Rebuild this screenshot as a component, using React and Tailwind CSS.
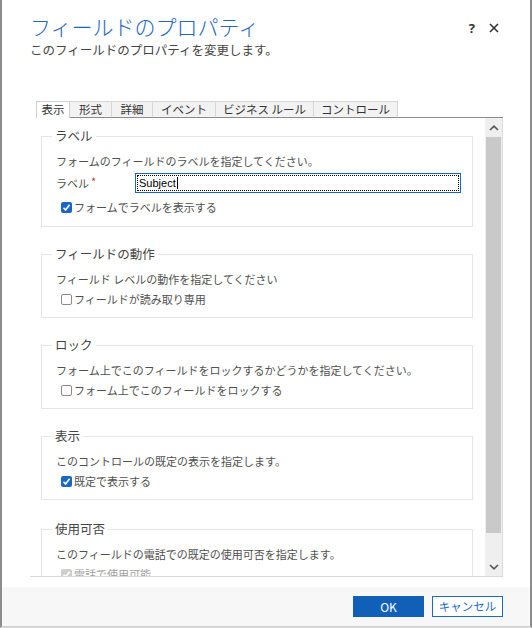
import { useState } from "react";

const jp = { fontFamily: '"Noto Sans CJK JP", "Noto Sans", sans-serif' };

const tabs = [
  { name: "表示", w: "w-[34px]" },
  { name: "形式", w: "w-[42px]" },
  { name: "詳細", w: "w-[41px]" },
  { name: "イベント", w: "w-[63px]" },
  { name: "ビジネス ルール", w: "w-[98px]" },
  { name: "コントロール", w: "w-[84px]" },
];

function CheckBox({ checked, disabled, label }) {
  return (
    <div className="flex h-4 items-center pl-[19px] text-[11px] text-[#505050]">
      {checked ? (
        <span
          className={`flex h-[11px] w-[11px] items-center justify-center rounded-[2px] ${
            disabled ? "bg-[#cfcfcf]" : "bg-[#1a66c8]"
          }`}
        >
          <svg width="9" height="9" viewBox="0 0 9 9">
            <path d="M1.5 4.8 L3.6 7 L7.6 1.8" fill="none" stroke="white" strokeWidth="1.6" />
          </svg>
        </span>
      ) : (
        <span className="h-[11px] w-[11px] rounded-[2px] border border-[#8a8a8a] bg-white" />
      )}
      <span className={`ml-[2px] ${disabled ? "text-[#a0a0a0]" : ""}`}>{label}</span>
    </div>
  );
}

function Section({ title, first, children }) {
  return (
    <fieldset className={`mb-[19px] border border-[#e5e5e5] ${first ? "pb-[11px]" : "pb-[10px]"}`}>
      <legend className="ml-[10px] px-[3px] text-[12.5px] leading-4 text-[#444]">{title}</legend>
      <div className="flex flex-col gap-1 pt-[9px]">{children}</div>
    </fieldset>
  );
}

function Desc({ children }) {
  return <p className="h-4 pl-[14px] text-[11px] leading-4 text-[#505050]">{children}</p>;
}

function ScrollBar() {
  return (
    <div className="flex w-[18px] shrink-0 flex-col border-r border-[#dcdcdc] bg-[#efefef]">
      <div className="flex h-[19px] items-center justify-center">
        <svg width="10" height="6" viewBox="0 0 10 6">
          <path d="M1 5 L5 1.2 L9 5" fill="none" stroke="#555" strokeWidth="1.6" />
        </svg>
      </div>
      <div className="mx-[1px] h-[396px] bg-[#c9c9c9]" />
      <div className="flex-1" />
      <div className="flex h-[19px] items-center justify-center">
        <svg width="10" height="6" viewBox="0 0 10 6">
          <path d="M1 1 L5 4.8 L9 1" fill="none" stroke="#555" strokeWidth="1.6" />
        </svg>
      </div>
    </div>
  );
}

export default function App() {
  const [active] = useState(0);

  return (
    <div
      className="flex h-[628px] w-[532px] flex-col overflow-hidden border-x-2 border-b-2 border-x-[#8c8c8c] border-b-[#d4d4d4] bg-white"
      style={jp}
    >
      <div className="pl-[28px] pr-[27px] pt-[12px]">
        <div className="flex items-start justify-between">
          <h1 className="text-[21px] font-light leading-7 text-[#2266c3]">フィールドのプロパティ</h1>
          <div className="mt-[8px] flex items-center gap-[14px] pr-[4px] text-[#333]">
            <span className="text-[13px] font-bold leading-4" style={{ fontFamily: '"Noto Sans", sans-serif' }}>
              ?
            </span>
            <svg width="10" height="10" viewBox="0 0 10 10">
              <path d="M1 1 L9 9 M9 1 L1 9" stroke="#333" strokeWidth="1.6" />
            </svg>
          </div>
        </div>
        <p className="mt-[2px] text-[12.5px] leading-4 text-[#444]">このフィールドのプロパティを変更します。</p>

        <div className="mt-[43px] flex items-end pl-[6px]">
          {tabs.map((t, i) => (
            <div
              key={t.name}
              className={`flex h-[17px] ${t.w} items-center justify-center border-t border-r text-[11.5px] text-[#333] ${
                i === 0 ? "border-l" : ""
              } ${
                i === active
                  ? "border-[#cfcfcf] bg-white"
                  : "border-[#d6d6d6] border-b border-b-[#8c8c8c] bg-[#f2f2f2]"
              }`}
            >
              {t.name}
            </div>
          ))}
          <div className="h-[17px] flex-1 border-b border-[#8c8c8c]" />
        </div>

        <div className="flex h-[459px] border-b border-[#d8d8d8]">
          <div className="flex-1 overflow-hidden pl-[11px] pr-[12px] pt-[10px]">
            <Section title="ラベル" first>
              <Desc>フォームのフィールドのラベルを指定してください。</Desc>
              <div className="flex h-5 items-center pl-[14px] text-[11px] text-[#505050]">
                <span className="w-[79px]">
                  ラベル<span className="relative -top-[2px] ml-[2px] text-[#d13438]">*</span>
                </span>
                <div className="flex h-5 w-[326px] items-center border border-[#1a66c8] p-[1px]">
                  <div
                    className="flex h-full w-full items-center border border-dotted border-black pl-[1px] text-[11px] text-black"
                    style={{ fontFamily: '"Liberation Sans", Arial, sans-serif' }}
                  >
                    Subject
                    <span className="ml-[1px] h-[12px] w-px bg-black" />
                  </div>
                </div>
              </div>
              <div className="pt-[2px]">
                <CheckBox checked label="フォームでラベルを表示する" />
              </div>
            </Section>

            <Section title="フィールドの動作">
              <Desc>フィールド レベルの動作を指定してください</Desc>
              <CheckBox label="フィールドが読み取り専用" />
            </Section>

            <Section title="ロック">
              <Desc>フォーム上でこのフィールドをロックするかどうかを指定してください。</Desc>
              <CheckBox label="フォーム上でこのフィールドをロックする" />
            </Section>

            <Section title="表示">
              <Desc>このコントロールの既定の表示を指定します。</Desc>
              <CheckBox checked label="既定で表示する" />
            </Section>

            <div className="pt-[2px]">
              <Section title="使用可否">
                <Desc>このフィールドの電話での既定の使用可否を指定します。</Desc>
                <CheckBox checked disabled label="電話で使用可能" />
              </Section>
            </div>
          </div>
          <ScrollBar />
        </div>
      </div>

      <div className="mt-[10px] flex flex-1 items-start justify-end gap-2 bg-[#f7f7f7] pr-[27px] pt-[9px]">
        <button className="h-[21px] w-[71px] bg-[#1160b7] text-[12px] text-white">OK</button>
        <button className="h-[21px] w-[71px] border border-[#1a6cc4] bg-white text-[11.5px] text-[#1a6cc4]">
          キャンセル
        </button>
      </div>
    </div>
  );
}
